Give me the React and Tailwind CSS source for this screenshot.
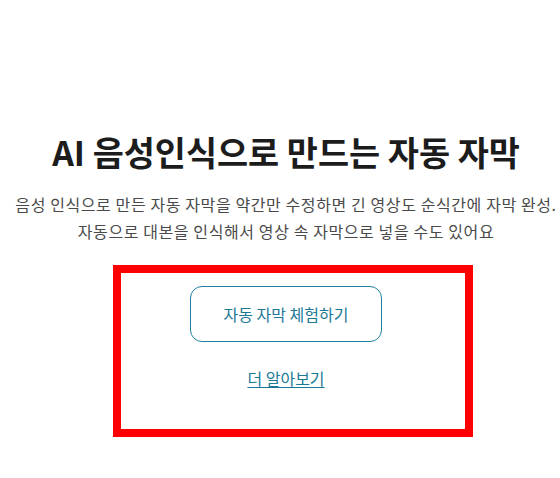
export default function App() {
    return (
        <div className="relative min-h-screen w-full overflow-hidden bg-white" style={{ fontFamily: '"Noto Sans CJK KR", "Noto Sans", sans-serif' }}>
            <div className="flex w-[572px] flex-col items-center pt-[131px]">
                <h1 className="whitespace-nowrap text-[33.8px] font-bold leading-[42px] text-[#1c1c1c]">
                    AI 음성인식으로 만드는 자동 자막
                </h1>
                <p className="mt-[18px] whitespace-nowrap text-center text-[16px] leading-[27px] tracking-[0.6px] text-[#4a4a4a]">
                    음성 인식으로 만든 자동 자막을 약간만 수정하면 긴 영상도 순식간에 자막 완성.
                    <br />
                    자동으로 대본을 인식해서 영상 속 자막으로 넣을 수도 있어요
                </p>
                <button className="mt-[41px] flex h-[56px] w-[192px] items-center justify-center rounded-[12px] border border-[#1f7fa0] text-[16px] text-[#1b7896]">
                    자동 자막 체험하기
                </button>
                <a href="#" className="mt-[24px] text-[16px] leading-[24px] text-[#1b7896] underline underline-offset-2">
                    더 알아보기
                </a>
            </div>
            <div className="pointer-events-none absolute left-[113px] top-[265px] h-[172px] w-[360px] border-8 border-[#ff0000]" />
        </div>
    );
}
